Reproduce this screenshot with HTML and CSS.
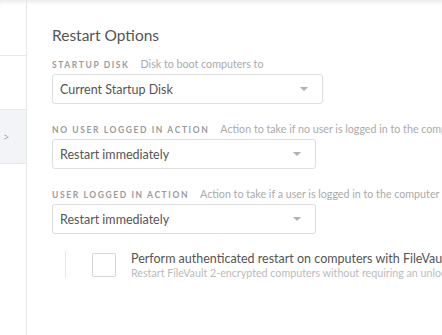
FILE: index.html
```html
<!DOCTYPE html>
<html lang="en">

<head>
    <meta charset="UTF-8">
    <meta name="viewport" content="width=device-width, initial-scale=1.0">
    <title>Restart Options</title>
    <link rel="stylesheet" href="styles.css">
</head>

<body>
    <div class="app">
        <div class="sidebar">
            <div class="nav-item first"></div>
            <div class="nav-item"></div>
            <div class="nav-item active"><span class="chevron">&gt;</span></div>
        </div>

        <div class="content">
            <h1>Restart Options</h1>

            <div class="field">
                <div class="label">
                    <span class="label-name">Startup Disk</span>
                    <span class="label-help">Disk to boot computers to</span>
                </div>
                <div class="select wide">
                    <span>Current Startup Disk</span>
                    <span class="arrow"></span>
                </div>
            </div>

            <div class="field">
                <div class="label">
                    <span class="label-name">No User Logged In Action</span>
                    <span class="label-help">Action to take if no user is logged in to the computer</span>
                </div>
                <div class="select">
                    <span>Restart immediately</span>
                    <span class="arrow"></span>
                </div>
            </div>

            <div class="field">
                <div class="label">
                    <span class="label-name">User Logged In Action</span>
                    <span class="label-help">Action to take if a user is logged in to the computer</span>
                </div>
                <div class="select">
                    <span>Restart immediately</span>
                    <span class="arrow"></span>
                </div>
            </div>

            <div class="sub-option">
                <div class="checkbox"></div>
                <div class="check-text">
                    <div class="check-title">Perform authenticated restart on computers with FileVault 2 enabled</div>
                    <div class="check-help">Restart FileVault 2-encrypted computers without requiring an unlock during the next startup</div>
                </div>
            </div>
        </div>
    </div>
</body>

</html>
```

FILE: styles.css
```css
body {
    margin: 0;
    font-family: Lato, "Open Sans", sans-serif;
    background-color: white;
    overflow: hidden;
}

.app {
    display: flex;
    height: 335px;
    box-shadow: inset 0 5px 5px -3px rgba(0, 0, 0, 0.09);
}

.sidebar {
    width: 26px;
    flex-shrink: 0;
    border-right: 1px solid #e6e6e6;
}

.nav-item {
    height: 53px;
    border-bottom: 1px solid #e9e9e9;
    display: flex;
    align-items: center;
}

.nav-item.first {
    height: 55px;
}

.nav-item.active {
    background-color: #f3f4f8;
}

.chevron {
    color: #777;
    font-size: 11px;
    font-weight: 300;
    margin-left: 3px;
}

.content {
    padding: 26px 0 0 25px;
    white-space: nowrap;
    overflow: hidden;
    flex: 1;
}

h1 {
    margin: 0 0 14px 0;
    font-size: 15.5px;
    font-weight: normal;
    color: #555;
}

.field {
    margin-bottom: 19px;
}

.label {
    display: flex;
    align-items: baseline;
    height: 11px;
    line-height: 11px;
    margin-bottom: 5px;
}

.label-name {
    font-size: 8.5px;
    font-weight: bold;
    letter-spacing: 1.6px;
    text-transform: uppercase;
    color: #9b9b9b;
    margin-right: 11px;
}

.label-help {
    font-size: 10.7px;
    color: #aaa;
}

.select {
    box-sizing: border-box;
    width: 264px;
    height: 30px;
    border: 1px solid #dedede;
    border-radius: 3px;
    padding: 0 14px 0 7px;
    display: flex;
    align-items: center;
    justify-content: space-between;
    font-size: 12.5px;
    color: #555;
}

.select.wide {
    width: 271px;
}

.arrow {
    width: 0;
    height: 0;
    border-left: 4px solid transparent;
    border-right: 4px solid transparent;
    border-top: 4px solid #b0b0b0;
}

.sub-option {
    display: flex;
    align-items: center;
    margin: -2px 0 0 13px;
    padding-left: 26px;
    border-left: 1px solid #e6e6e6;
    height: 27px;
}

.checkbox {
    width: 22px;
    height: 22px;
    border: 1px solid #d6d6d6;
    border-radius: 2px;
    flex-shrink: 0;
    margin-right: 15px;
}

.check-title {
    font-size: 12.5px;
    color: #555;
    line-height: 15px;
}

.check-help {
    font-size: 10.7px;
    color: #bbb;
    line-height: 13px;
}
```
